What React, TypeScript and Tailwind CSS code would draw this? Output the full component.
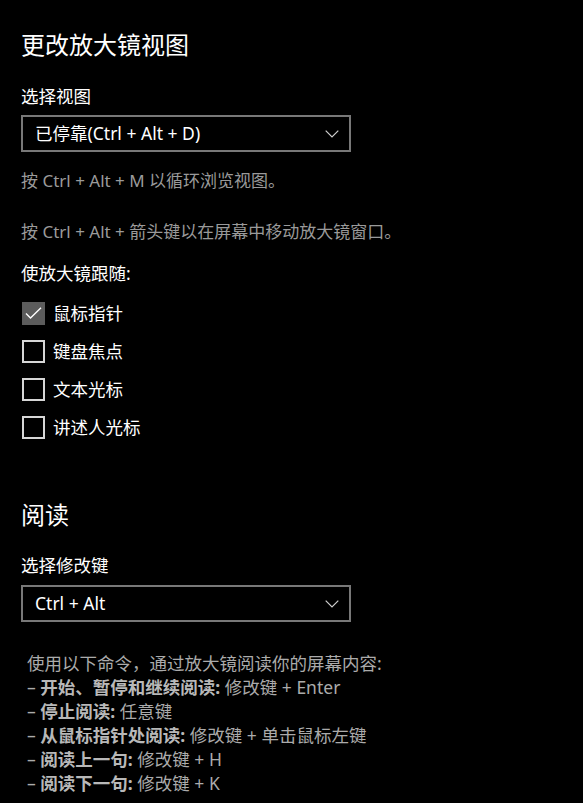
import React from "react";

const font = { fontFamily: '"Noto Sans", "Noto Sans CJK SC", sans-serif' };

function Chevron() {
  return (
    <svg width="14" height="8" viewBox="0 0 14 8" className="text-[#cfcfcf]">
      <path d="M0.7 0.7 L7 7 L13.3 0.7" fill="none" stroke="currentColor" strokeWidth="1.2" />
    </svg>
  );
}

function Dropdown({ label }: { label: string }) {
  return (
    <div className="flex h-[37px] w-[330px] items-center justify-between border-2 border-[#787878] pl-[12px] pr-[10px] text-[17.5px] text-white">
      <span>{label}</span>
      <Chevron />
    </div>
  );
}

function Check({ label, checked }: { label: string; checked?: boolean }) {
  return (
    <div className="flex h-[38px] items-center">
      {checked ? (
        <div className="flex h-[23px] w-[23px] items-center justify-center bg-[#5c5c5c]">
          <svg width="17" height="12" viewBox="0 0 17 12">
            <path d="M1 6.5 L5.5 11 L16 0.8" fill="none" stroke="#ffffff" strokeWidth="1.4" />
          </svg>
        </div>
      ) : (
        <div className="h-[23px] w-[23px] border-2 border-[#d6d6d6]" />
      )}
      <span className="ml-[8px] text-[17.5px] text-white">{label}</span>
    </div>
  );
}

export default function App() {
  return (
    <div className="min-h-[803px] w-[583px] bg-black pl-[21px] pt-[29px]" style={font}>
      <div className="text-[24px] leading-[32px] text-white">更改放大镜视图</div>
      <div className="mt-[23px] text-[17.5px] leading-[24px] text-white">选择视图</div>
      <div className="mt-[7px]">
        <Dropdown label="已停靠(Ctrl + Alt + D)" />
      </div>
      <div className="mt-[17px] text-[17px] leading-[24px] text-[#9a9a9a]">按 Ctrl + Alt + M 以循环浏览视图。</div>
      <div className="mt-[27px] text-[17px] leading-[24px] text-[#9a9a9a]">按 Ctrl + Alt + 箭头键以在屏幕中移动放大镜窗口。</div>
      <div className="mt-[17px] text-[17.5px] leading-[24px] text-white">使放大镜跟随:</div>
      <div className="mt-[9px] flex flex-col pl-px">
        <Check label="鼠标指针" checked />
        <Check label="键盘焦点" />
        <Check label="文本光标" />
        <Check label="讲述人光标" />
      </div>
      <div className="mt-[53px] text-[24px] leading-[32px] text-white">阅读</div>
      <div className="mt-[22px] text-[17.5px] leading-[24px] text-white">选择修改键</div>
      <div className="mt-[8px]">
        <Dropdown label="Ctrl + Alt" />
      </div>
      <div className="mt-[29px] pl-[6px] text-[17.5px] leading-[24px] text-[#ababab]">
        <div>使用以下命令，通过放大镜阅读你的屏幕内容:</div>
        <div>– <b className="font-bold text-[#b8b8b8]">开始、暂停和继续阅读:</b> 修改键 + Enter</div>
        <div>– <b className="font-bold text-[#b8b8b8]">停止阅读:</b> 任意键</div>
        <div>– <b className="font-bold text-[#b8b8b8]">从鼠标指针处阅读:</b> 修改键 + 单击鼠标左键</div>
        <div>– <b className="font-bold text-[#b8b8b8]">阅读上一句:</b> 修改键 + H</div>
        <div>– <b className="font-bold text-[#b8b8b8]">阅读下一句:</b> 修改键 + K</div>
      </div>
    </div>
  );
}
